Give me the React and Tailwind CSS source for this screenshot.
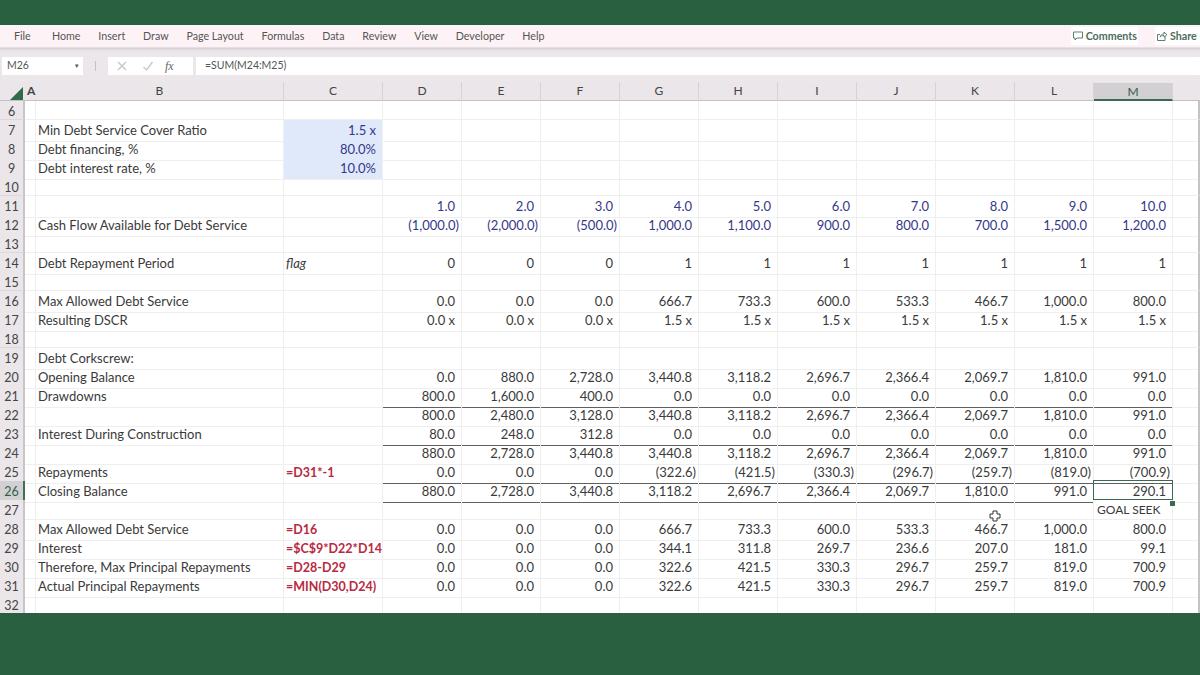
const tabs = ["Home","Insert","Draw","Page Layout","Formulas","Data","Review","View","Developer","Help"];
const cols = ["D","E","F","G","H","I","J","K","L","M"];
const rows = [
 [6],
 [7,"Min Debt Service Cover Ratio",{v:"1.5 x",t:"in"}],
 [8,"Debt financing, %",{v:"80.0%",t:"in"}],
 [9,"Debt interest rate, %",{v:"10.0%",t:"in"}],
 [10],
 [11,"","",["1.0","2.0","3.0","4.0","5.0","6.0","7.0","8.0","9.0","10.0"],"blue"],
 [12,"Cash Flow Available for Debt Service","",["(1,000.0)","(2,000.0)","(500.0)","1,000.0","1,100.0","900.0","800.0","700.0","1,500.0","1,200.0"],"blue"],
 [13],
 [14,"Debt Repayment Period",{v:"flag",t:"flag"},["0","0","0","1","1","1","1","1","1","1"]],
 [15],
 [16,"Max Allowed Debt Service","",["0.0","0.0","0.0","666.7","733.3","600.0","533.3","466.7","1,000.0","800.0"]],
 [17,"Resulting DSCR","",["0.0 x","0.0 x","0.0 x","1.5 x","1.5 x","1.5 x","1.5 x","1.5 x","1.5 x","1.5 x"]],
 [18],
 [19,"Debt Corkscrew:"],
 [20,"Opening Balance","",["0.0","880.0","2,728.0","3,440.8","3,118.2","2,696.7","2,366.4","2,069.7","1,810.0","991.0"]],
 [21,"Drawdowns","",["800.0","1,600.0","400.0","0.0","0.0","0.0","0.0","0.0","0.0","0.0"],"line"],
 [22,"","",["800.0","2,480.0","3,128.0","3,440.8","3,118.2","2,696.7","2,366.4","2,069.7","1,810.0","991.0"]],
 [23,"Interest During Construction","",["80.0","248.0","312.8","0.0","0.0","0.0","0.0","0.0","0.0","0.0"],"line"],
 [24,"","",["880.0","2,728.0","3,440.8","3,440.8","3,118.2","2,696.7","2,366.4","2,069.7","1,810.0","991.0"]],
 [25,"Repayments",{v:"=D31*-1",t:"f"},["0.0","0.0","0.0","(322.6)","(421.5)","(330.3)","(296.7)","(259.7)","(819.0)","(700.9)"],"line"],
 [26,"Closing Balance","",["880.0","2,728.0","3,440.8","3,118.2","2,696.7","2,366.4","2,069.7","1,810.0","991.0","290.1"],"line"],
 [27,"","",["","","","","","","","","","GOAL SEEK"],"goal"],
 [28,"Max Allowed Debt Service",{v:"=D16",t:"f"},["0.0","0.0","0.0","666.7","733.3","600.0","533.3","466.7","1,000.0","800.0"]],
 [29,"Interest",{v:"=$C$9*D22*D14",t:"f"},["0.0","0.0","0.0","344.1","311.8","269.7","236.6","207.0","181.0","99.1"]],
 [30,"Therefore, Max Principal Repayments",{v:"=D28-D29",t:"f"},["0.0","0.0","0.0","322.6","421.5","330.3","296.7","259.7","819.0","700.9"]],
 [31,"Actual Principal Repayments",{v:"=MIN(D30,D24)",t:"f"},["0.0","0.0","0.0","322.6","421.5","330.3","296.7","259.7","819.0","700.9"]],
 [32],
];

function Row({r}) {
  const [n,label,c,vals,kind] = r;
  const active = n===26;
  const cells = vals || Array(10).fill("");
  const cv = c && c.v;
  const ct = c && c.t;
  return (
    <div className="grid grid-cols-[25px_11px_248px_99px_repeat(10,79px)_1fr] h-[19px] leading-[21px]">
      <div className={`text-center border-r-2 border-b border-b-[#dcd8dc] text-[12.5px] overflow-hidden ${active ? "bg-[#d3d0d4] border-r-[#3f6f55] text-[#2f5f47]" : "bg-[#eae6ea] border-r-[#c8c4c8] text-[#444]"}`}>{n}</div>
      <div className="border-r border-b border-[#efefef]" />
      <div className="border-r border-b border-[#efefef] pl-[2px] text-[#3a3a3a] whitespace-nowrap">{label}</div>
      <div className={`border-r border-b border-[#efefef] whitespace-nowrap ${ct==="in" ? "bg-[#dfe9fa] text-right pr-[6px] text-[#35378a]" : ct==="flag" ? "italic pl-[2px] text-[#3a3a3a]" : "pl-[2px] font-bold text-[12.5px] text-[#b82a40]"}`}>{cv}</div>
      {cells.map((v,i)=>{
        const sel = active && i===9;
        const paren = v.startsWith("(");
        const goal = v==="GOAL SEEK";
        return (
          <div key={i} className={`relative whitespace-nowrap border-r border-[#efefef] ${sel ? "z-10" : ""} ${kind==="line" && !sel ? "border-b border-b-[#606060]" : sel ? "" : "border-b border-b-[#efefef]"} ${goal ? "text-left pl-[3px] text-[12px] leading-[19px]" : "text-right"} ${paren ? "pr-[2px]" : "pr-[6px]"} ${kind==="blue" ? "text-[#35378a]" : "text-[#3a3a3a]"}`}>
            {v}
            {sel && <span className="absolute -left-px -top-px w-[80px] h-[20px] border border-[#3a6b52]" />}
            {sel && <span className="absolute right-[-3px] bottom-[-3px] w-[5px] h-[5px] bg-[#3a6b52]" />}
          </div>
        );
      })}
      <div className="border-r-2 border-r-[#c4c4c4] border-b border-b-[#efefef]" />
    </div>
  );
}

export default function App() {
  return (
    <div className="w-[1200px] h-[675px] overflow-hidden flex flex-col bg-[#29603f] font-['Lato','Liberation_Sans',sans-serif] text-[13px]">
      <div className="h-[25px] shrink-0 bg-[#29603f]" />
      <div className="h-[23px] shrink-0 bg-[#fdf3f6] flex items-center text-[10.7px] text-[#555] border-b border-[#e4dfe3]">
        <span className="ml-[14px] w-[38px]">File</span>
        <div className="flex gap-[17.85px]">
          {tabs.map(t=><span key={t}>{t}</span>)}
        </div>
        <div className="ml-auto flex items-center text-[#4e6b60] font-bold">
          <span className="flex items-center gap-[2px] bg-white h-[18px] px-[1px] mr-[17px]">
            <svg width="12" height="12" viewBox="0 0 12 12" fill="none" stroke="#5f7f72" strokeWidth="1"><path d="M1.500 2h9v6H5L3 10V8H1.500z"/></svg>
            Comments
          </span>
          <span className="flex items-center gap-[2px] bg-white h-[18px] pl-[1px] w-[45px] overflow-hidden">
            <svg className="shrink-0" width="12" height="12" viewBox="0 0 12 12" fill="none" stroke="#5f7f72" strokeWidth="1"><path d="M9 6.500V10.500H1.500V4.500H4M4 7c.5-2 2-3 4-3V2l3 2.700L8 7.200V5.500C6 5.500 5 6 4 7z"/></svg>
            Share
          </span>
        </div>
      </div>
      <div className="h-[34px] shrink-0 bg-[#ebe7eb] flex items-center pt-[1px] shadow-[inset_0_3px_3px_-2px_#c9c5c9]">
        <div className="ml-[2px] w-[81px] h-[18px] bg-white flex items-center justify-between pl-[5px] pr-[3px] text-[10.5px] text-[#555]">
          <span>M26</span>
          <span className="text-[7px] text-[#555] pr-[1px]">▾</span>
        </div>
        <div className="w-[25px] flex justify-center"><span className="w-[1px] h-[10px] bg-[#c4c0c4]" /></div>
        <div className="w-[85px] h-[18px] bg-white flex items-center text-[#bbb]">
          <svg className="ml-[8px]" width="12" height="12" viewBox="0 0 12 12" fill="none" stroke="#c8c8c8" strokeWidth="1.4"><path d="M2 2l8 8M10 2l-8 8"/></svg>
          <svg className="ml-[14px]" width="12" height="12" viewBox="0 0 12 12" fill="none" stroke="#c8c8c8" strokeWidth="1.4"><path d="M1.500 7l3 3 6-8"/></svg>
          <span className="ml-[11px] italic font-['Liberation_Serif',serif] text-[12px] text-[#666]">fx</span>
        </div>
        <div className="ml-[3px] flex-1 h-[18px] bg-white flex items-center pl-[9px] text-[10.5px] text-[#555]">=SUM(M24:M25)</div>
      </div>
      <div className="flex-1 min-h-0 flex flex-col">
        <div className="grid grid-cols-[25px_11px_248px_99px_repeat(10,79px)_1fr] h-[19px] shrink-0 bg-[#eae6ea] text-[12px] text-[#444] leading-[18px] text-center border-b border-[#c4c0c4]">
          <div className="relative"><span className="absolute right-[2px] bottom-[1px] w-0 h-0 border-l-[13px] border-l-transparent border-b-[13px] border-b-[#2f6b4c]" /></div>
          <div className="text-left ml-[2px] font-bold">A</div>
          {["B","C",...cols].map(c=>(
            <div key={c} className={`border-r border-[#d6d2d6] ${c==="M" ? "bg-[#d3d0d4] text-[#2f5f47] border-b-2 border-b-[#3a6b52] h-[18px] mt-px" : ""}`}>{c}</div>
          ))}
          <div />
        </div>
        <div className="bg-white h-[512px] overflow-hidden relative">
          {rows.map(r=><Row key={r[0]} r={r} />)}
          <svg className="absolute left-[989px] top-[409px] z-10" width="12" height="12" viewBox="0 0 12 12" fill="white" stroke="#333" strokeWidth="1"><path d="M4 1h4v3h3v4H8v3H4V8H1V4h3z"/></svg>
        </div>
      </div>
      <div className="h-[62px] shrink-0 bg-[#29603f]" />
    </div>
  );
}
